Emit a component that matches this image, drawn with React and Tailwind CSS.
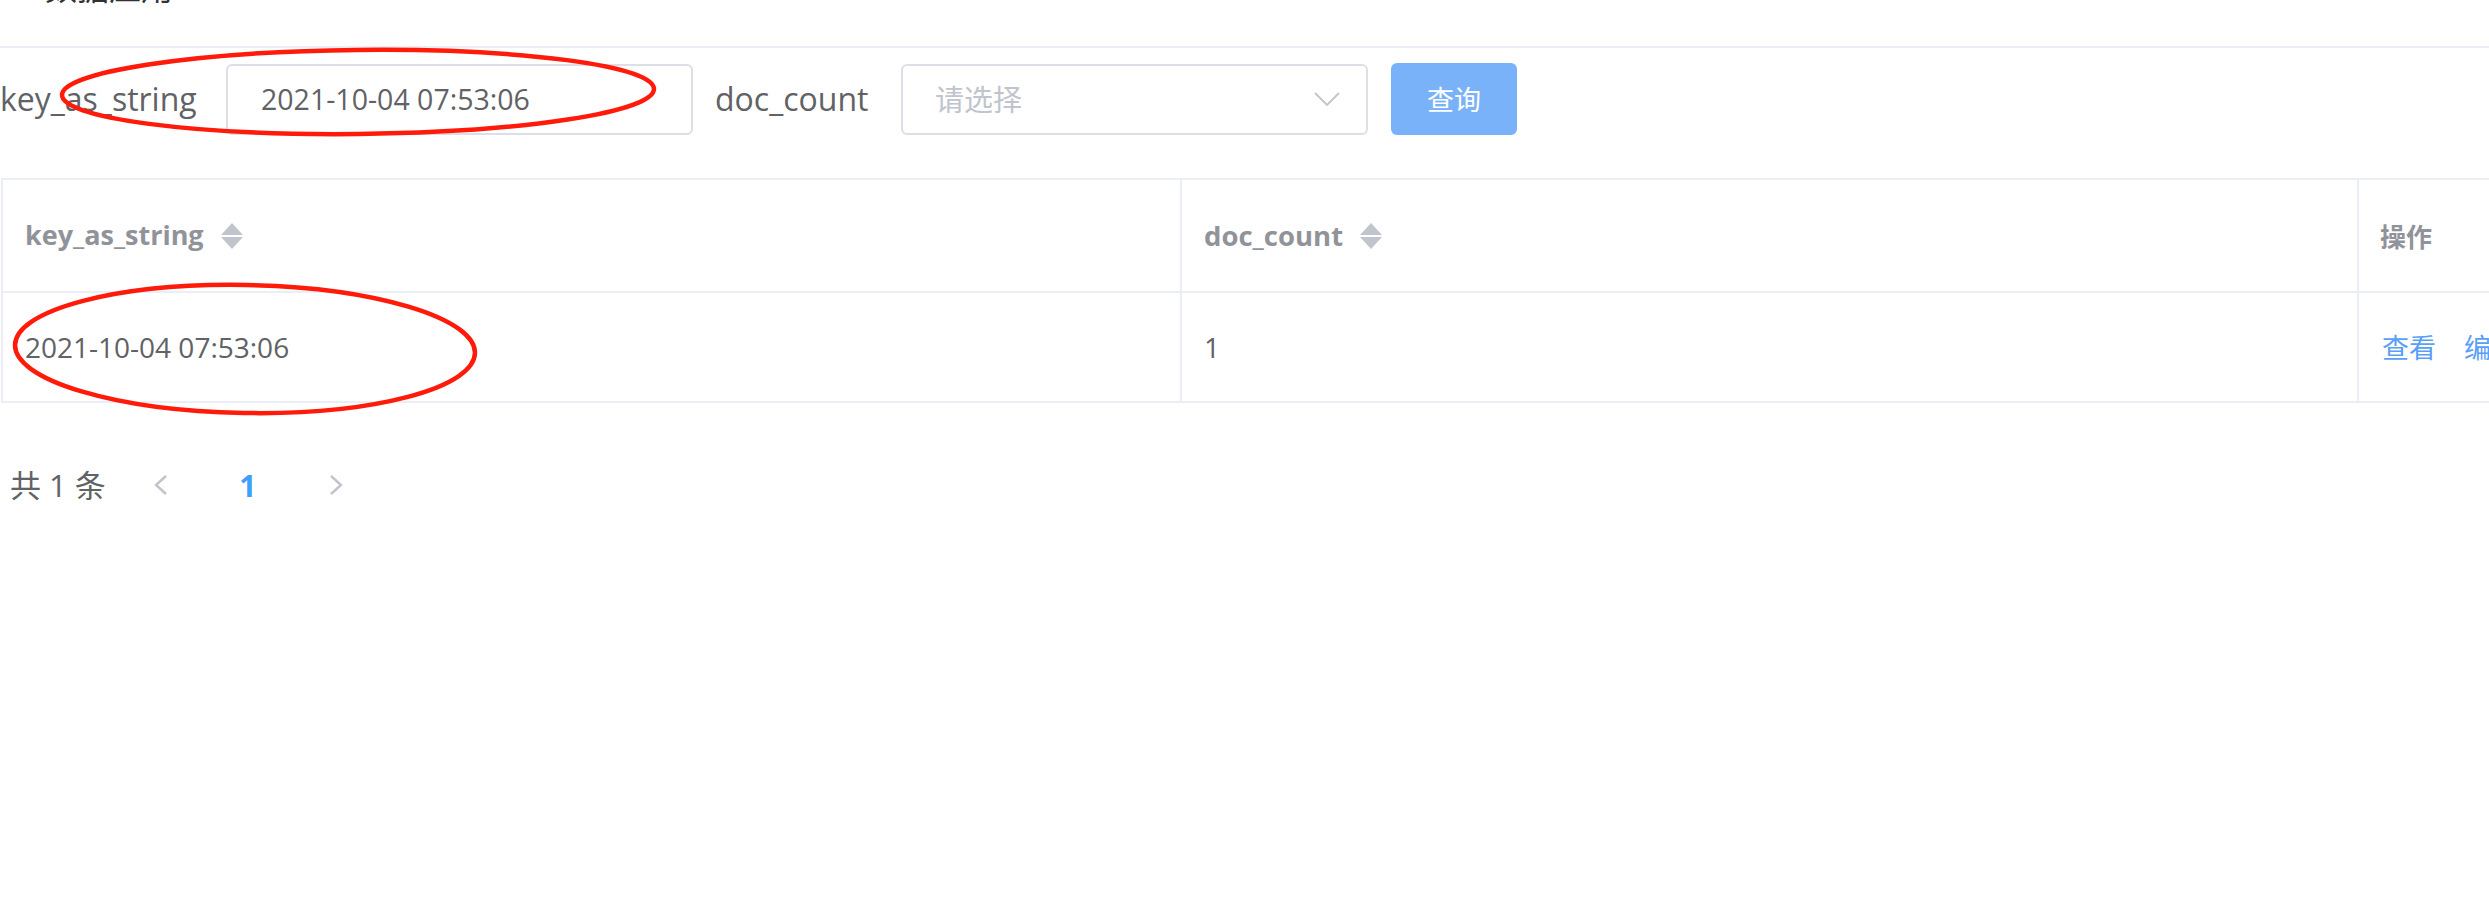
import React from "react";

const SortCaret = () => (
  <svg width="22" height="26" viewBox="0 0 22 26" className="ml-[17px] shrink-0">
    <polygon points="0,12 11,0 22,12" fill="#c0c4cc" />
    <polygon points="0,14 22,14 11,26" fill="#c0c4cc" />
  </svg>
);

const Arrow = ({ dir }) => (
  <svg width="14" height="20" viewBox="0 0 14 20">
    <polyline
      points={dir === "left" ? "12,1 2,10 12,19" : "2,1 12,10 2,19"}
      fill="none"
      stroke="#c0c4cc"
      strokeWidth="2.4"
    />
  </svg>
);

const App = () => {
  return (
    <div className="relative w-full h-[904px] overflow-hidden bg-white font-['Open_Sans','Noto_Sans_CJK_SC',sans-serif]">
      {/* title, mostly scrolled out of view */}
      <div className="h-[48px] border-b-2 border-[#ebeef5] overflow-hidden">
        <div className="-mt-[30px] pl-[45px] text-[32px] leading-[32px] text-[#303133] font-['Noto_Sans_CJK_SC',sans-serif]">
          数据应用
        </div>
      </div>

      {/* search form */}
      <div className="flex items-center mt-[15px] h-[72px]">
        <div className="w-[226px] text-[32px] leading-[40px] text-[#606266]">key_as_string</div>
        <div className="w-[467px] h-[71px] flex items-center pl-[33px] border-2 border-[#dcdfe6] rounded-[6px] text-[28.5px] text-[#606266]">
          2021-10-04 07:53:06
        </div>
        <div className="w-[208px] pl-[22px] text-[32px] leading-[40px] text-[#606266]">doc_count</div>
        <div className="w-[467px] h-[71px] flex items-center justify-between pl-[32px] pr-[26px] border-2 border-[#dcdfe6] rounded-[6px]">
          <span className="text-[29px] text-[#c0c4cc] font-['Noto_Sans_CJK_SC',sans-serif]">请选择</span>
          <svg width="26" height="14" viewBox="0 0 26 14">
            <polyline points="1,1 13,13 25,1" fill="none" stroke="#c0c4cc" strokeWidth="1.8" />
          </svg>
        </div>
        <button className="ml-[23px] w-[126px] h-[72px] rounded-[6px] bg-[#79b2f8] text-white text-[27px] font-['Noto_Sans_CJK_SC',sans-serif]">
          查询
        </button>
      </div>

      {/* table */}
      <div className="mt-[43px] ml-[1px] w-[2700px] border-t-2 border-l-2 border-[#ebeef5]">
        <div className="grid grid-cols-[1179px_1177px_344px]">
          <div className="h-[113px] flex items-center pl-[22px] border-r-2 border-b-2 border-[#ebeef5] text-[27px] font-bold text-[#909399]">
            key_as_string
            <SortCaret />
          </div>
          <div className="h-[113px] flex items-center pl-[22px] border-r-2 border-b-2 border-[#ebeef5] text-[27.5px] font-bold text-[#909399]">
            doc_count
            <SortCaret />
          </div>
          <div className="h-[113px] flex items-center pl-[21px] border-r-2 border-b-2 border-[#ebeef5] text-[26px] font-bold text-[#909399] font-['Noto_Sans_CJK_SC',sans-serif]">
            操作
          </div>

          <div className="h-[110px] flex items-center pl-[22px] border-r-2 border-b-2 border-[#ebeef5] text-[28px] text-[#606266]">
            2021-10-04 07:53:06
          </div>
          <div className="h-[110px] flex items-center pl-[22px] border-r-2 border-b-2 border-[#ebeef5] text-[28px] text-[#606266]">
            1
          </div>
          <div className="h-[110px] flex items-center gap-[28px] pl-[23px] border-r-2 border-b-2 border-[#ebeef5] text-[27px] text-[#5a9ff5] font-['Noto_Sans_CJK_SC',sans-serif]">
            <span>查看</span>
            <span>编辑</span>
            <span>删除</span>
          </div>
        </div>
      </div>

      {/* pagination */}
      <div className="flex items-center mt-[63px] h-[38px] pl-[10px]">
        <span className="text-[31px] text-[#606266]">共 1 条</span>
        <div className="ml-[12px] w-[86px] flex justify-center"><Arrow dir="left" /></div>
        <div className="w-[88px] text-center text-[30px] font-bold text-[#409eff]">1</div>
        <div className="w-[88px] flex justify-center"><Arrow dir="right" /></div>
      </div>

      {/* hand-drawn marks over the page */}
      <svg className="absolute left-0 top-0 pointer-events-none" width="2489" height="904">
        <ellipse cx="358" cy="92" rx="296" ry="42" fill="none" stroke="#ff1a0a" strokeWidth="4.5" transform="rotate(-0.6 358 92)" />
        <ellipse cx="245" cy="349" rx="230" ry="64" fill="none" stroke="#ff1a0a" strokeWidth="4.5" transform="rotate(1 245 349)" />
      </svg>
    </div>
  );
};

export default App;
